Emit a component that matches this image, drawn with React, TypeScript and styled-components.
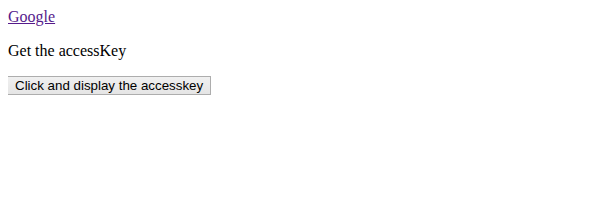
import styled, { createGlobalStyle } from "styled-components";

const GlobalStyle = createGlobalStyle`
  body {
    margin: 8px;
    font-family: "Liberation Serif", "Times New Roman", serif;
    font-size: 16px;
    color: #000000;
    background: #ffffff;
  }
`;

const Page = styled.div`
  display: block;
`;

const LinkText = styled.a`
  color: #551a8b;
  text-decoration: underline;
`;

const Paragraph = styled.p`
  margin: 16px 0;
`;

const DisplayButton = styled.button`
  font-family: "Liberation Sans", Arial, sans-serif;
  font-size: 13.333px;
  color: #000000;
  padding: 1px 7px;
  margin: 0 0 0 -1px;
  border: 1px solid #adadad;
  border-radius: 0;
  background: linear-gradient(#f0f0f0, #e5e5e5);
  cursor: default;
`;

const App = () => {
  const showKey = () => {
    alert("The accessKey is: g");
  };

  return (
    <Page>
      <GlobalStyle />
      <LinkText href="#" accessKey="g">
        Google
      </LinkText>
      <Paragraph>Get the accessKey</Paragraph>
      <DisplayButton onClick={showKey}>Click and display the accesskey</DisplayButton>
    </Page>
  );
};

export default App;
